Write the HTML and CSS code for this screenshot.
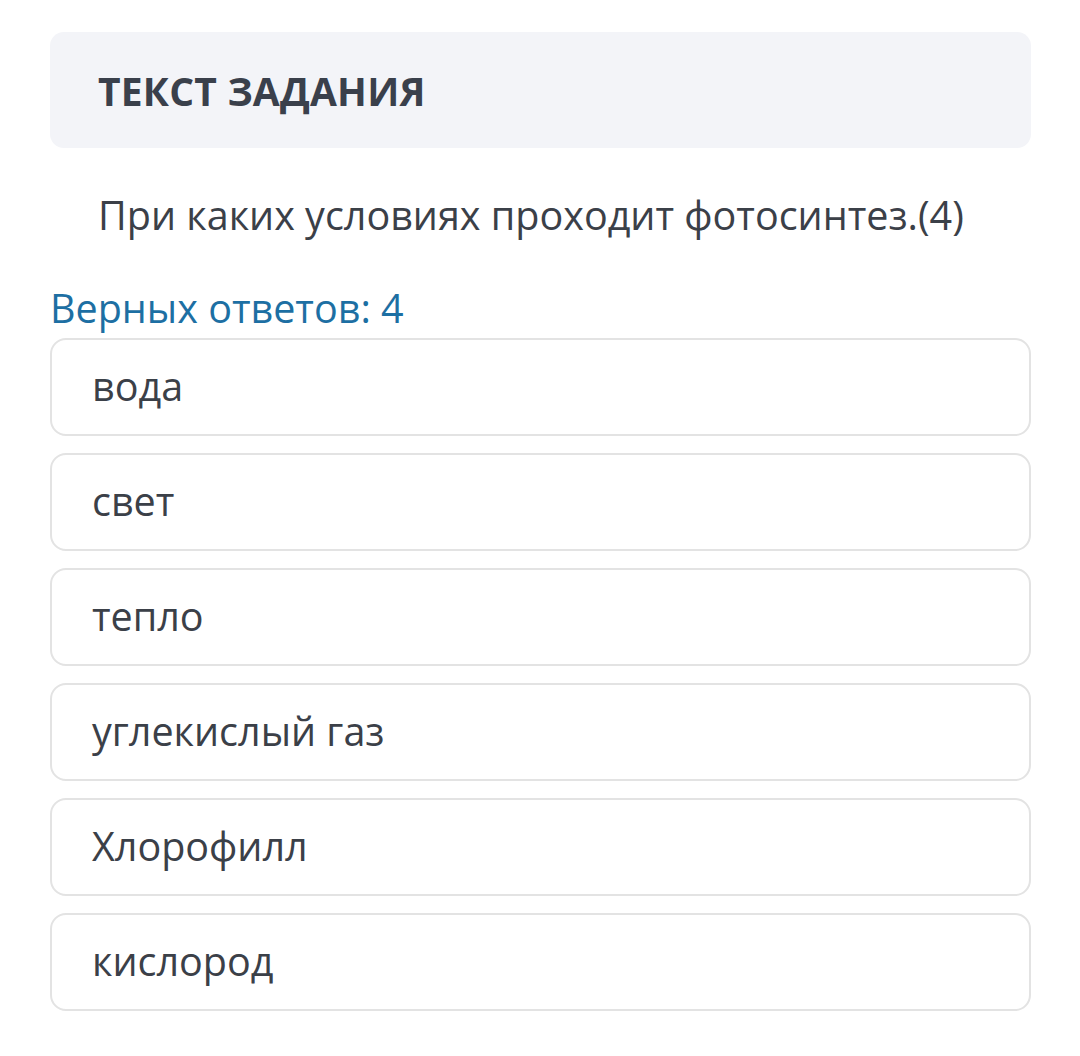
FILE: index.html
```html
<!DOCTYPE html>
<html lang="ru">
<head>
<meta charset="utf-8">
<link rel="stylesheet" href="styles.css">
</head>
<body>
<div class="page">
  <div class="task-head">
    <h2 class="task-title">ТЕКСТ ЗАДАНИЯ</h2>
  </div>
  <p class="question">При каких условиях проходит фотосинтез.(4)</p>
  <div class="count">Верных ответов: 4</div>
  <ul class="answers">
    <li class="answer">вода</li>
    <li class="answer">свет</li>
    <li class="answer">тепло</li>
    <li class="answer">углекислый газ</li>
    <li class="answer">Хлорофилл</li>
    <li class="answer">кислород</li>
  </ul>
</div>
</body>
</html>
```

FILE: styles.css
```css
html, body {
  margin: 0;
  padding: 0;
  background: #ffffff;
}
body {
  font-family: "Open Sans", "Noto Sans", sans-serif;
  color: #3b4048;
}
.page {
  width: 981px;
  margin-left: 50px;
  padding-top: 32px;
}
.task-head {
  background: #f3f4f8;
  border-radius: 14px;
  height: 116px;
  display: flex;
  align-items: center;
  padding-left: 48px;
}
.task-title {
  margin: 0;
  font-size: 39px;
  font-weight: 700;
  color: #3a404b;
  letter-spacing: 0.2px;
}
.question {
  margin: 0;
  padding: 41px 0 0 48px;
  font-size: 39.5px;
  line-height: 52px;
  color: #3b4048;
}
.count {
  margin-top: 45px;
  font-size: 39.5px;
  line-height: 44px;
  color: #1d6fa3;
}
.answers {
  list-style: none;
  margin: 8px 0 0;
  padding: 0;
  display: flex;
  flex-direction: column;
  gap: 17px;
}
.answer {
  box-sizing: border-box;
  height: 98px;
  border: 2px solid #e3e3e3;
  border-radius: 16px;
  display: flex;
  align-items: center;
  padding-left: 40px;
  padding-bottom: 2px;
  font-size: 39.5px;
  color: #3b4048;
}
```
